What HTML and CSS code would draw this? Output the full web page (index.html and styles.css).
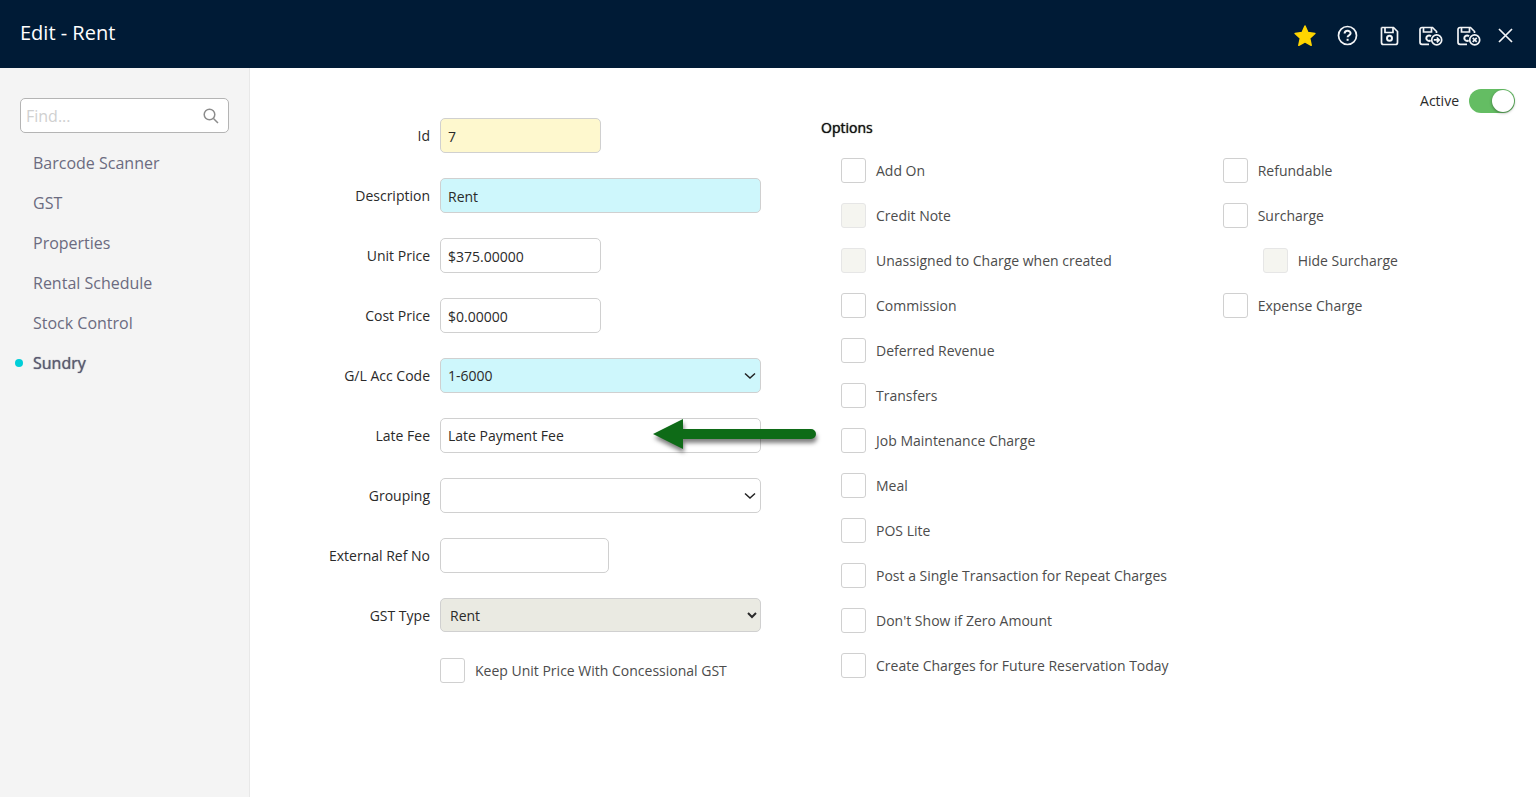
FILE: index.html
```
<!DOCTYPE html>
<html lang="en">
<head>
  <meta charset="UTF-8">
  <meta name="viewport" content="width=device-width, initial-scale=1.0">
  <title>Edit - Rent</title>
  <link rel="stylesheet" href="styles.css">
</head>
<body>
  <header class="topbar">
    <h1>Edit - Rent</h1>
    <div class="toolbar">
      <button type="button" class="wide" aria-label="Favourite">
        <svg width="24" height="24" viewBox="0 0 24 24"><path d="M11 2l2.900 6.600 7 .8-5.200 4.900 1.500 7L11 17.800l-6.200 3.500 1.500-7L1.100 9.400l7-.8z" fill="#ffd500" stroke="#ffd500" stroke-width="1.500" stroke-linejoin="round"/></svg>
      </button>
      <button type="button" class="wide" aria-label="Help">
        <svg width="24" height="24" viewBox="0 0 24 24"><circle cx="12.500" cy="11.500" r="9"/><path d="M9.600 9.600c0-3.700 6-3.600 6-.3 0 2.200-3 2-3 4" stroke-width="2"/><path d="M12.600 14.800v2" stroke-width="2"/></svg>
      </button>
      <button type="button" class="wide" aria-label="Save">
        <svg width="24" height="24" viewBox="0 0 24 24"><path d="M5.500 3.500h12l4 4v11a2 2 0 0 1-2 2h-12a2 2 0 0 1-2-2v-15"/><path d="M9 3.500v5h8v-5"/><circle cx="13.500" cy="14.200" r="2.500" stroke-width="2"/></svg>
      </button>
      <button type="button" aria-label="Save and next">
        <svg width="26" height="24" viewBox="0 0 26 24"><path d="M12 20.300H5a2 2 0 0 1-2-2V5.500a2 2 0 0 1 2-2h10.500l4 4V9"/><path d="M6.500 3.500v4.500h8V3.500"/><path d="M14 12.300c-1.700-1.400-4.700-.6-4.700 1.900s3 3.300 4.300 2.100" stroke-width="2"/><circle cx="19.700" cy="15.900" r="5"/><path d="M16.800 15.900h5.400M19.800 13.500l2.400 2.400-2.400 2.400"/></svg>
      </button>
      <button type="button" aria-label="Save and close">
        <svg width="26" height="24" viewBox="0 0 26 24"><path d="M12 20.300H5a2 2 0 0 1-2-2V5.500a2 2 0 0 1 2-2h10.500l4 4V9"/><path d="M6.500 3.500v4.500h8V3.500"/><path d="M14 12.300c-1.700-1.400-4.700-.6-4.700 1.900s3 3.300 4.300 2.100" stroke-width="2"/><circle cx="19.700" cy="15.900" r="5"/><path d="M17.700 13.900l4 4M21.700 13.900l-4 4"/></svg>
      </button>
      <button type="button" aria-label="Close">
        <svg width="24" height="24" viewBox="0 0 24 24"><path d="M6 5l13 13M19 5L6 18"/></svg>
      </button>
    </div>
  </header>

  <div class="page">
    <aside class="sidebar">
      <div class="search">
        <input type="text" placeholder="Find..." aria-label="Find">
        <svg width="16" height="16" viewBox="0 0 16 16"><circle cx="6.500" cy="6.500" r="5.300"/><path d="M10.500 10.500l4.500 4.500"/></svg>
      </div>
      <nav>
        <a href="#">Barcode Scanner</a>
        <a href="#">GST</a>
        <a href="#">Properties</a>
        <a href="#">Rental Schedule</a>
        <a href="#">Stock Control</a>
        <a href="#" class="current">Sundry</a>
      </nav>
    </aside>

    <main>
      <label class="active-toggle">
        Active
        <input type="checkbox" class="switch" checked>
      </label>

      <div class="content">
        <form class="fields">
          <div class="row">
            <label for="id">Id</label>
            <input type="text" id="id" class="short key" value="7" readonly>
          </div>
          <div class="row">
            <label for="description">Description</label>
            <input type="text" id="description" class="required" value="Rent">
          </div>
          <div class="row">
            <label for="unit-price">Unit Price</label>
            <input type="text" id="unit-price" class="short" value="$375.00000">
          </div>
          <div class="row">
            <label for="cost-price">Cost Price</label>
            <input type="text" id="cost-price" class="short" value="$0.00000">
          </div>
          <div class="row">
            <label for="acc-code">G/L Acc Code</label>
            <div class="combo">
              <select id="acc-code" class="required"><option>1-6000</option></select>
              <svg width="12" height="8" viewBox="0 0 12 8"><path d="M1 1.500l5 4.500 5-4.500"/></svg>
            </div>
          </div>
          <div class="row">
            <label for="late-fee">Late Fee</label>
            <div class="combo">
              <input type="text" id="late-fee" value="Late Payment Fee">
              <svg class="arrow" width="175" height="44" viewBox="0 0 175 44"><path d="M1 16L31 1v10h128a5 5 0 0 1 0 10H31v10z"/></svg>
            </div>
          </div>
          <div class="row">
            <label for="grouping">Grouping</label>
            <div class="combo">
              <select id="grouping"><option></option></select>
              <svg width="12" height="8" viewBox="0 0 12 8"><path d="M1 1.500l5 4.500 5-4.500"/></svg>
            </div>
          </div>
          <div class="row">
            <label for="ref-no">External Ref No</label>
            <input type="text" id="ref-no" class="medium">
          </div>
          <div class="row">
            <label for="gst-type">GST Type</label>
            <select id="gst-type" class="locked"><option>Rent</option></select>
          </div>
          <label class="check indent"><input type="checkbox">Keep Unit Price With Concessional GST</label>
        </form>

        <section class="options">
          <h2>Options</h2>
          <div class="option-columns">
            <div class="option-list">
              <label class="check"><input type="checkbox">Add On</label>
              <label class="check"><input type="checkbox" disabled>Credit Note</label>
              <label class="check"><input type="checkbox" disabled>Unassigned to Charge when created</label>
              <label class="check"><input type="checkbox">Commission</label>
              <label class="check"><input type="checkbox">Deferred Revenue</label>
              <label class="check"><input type="checkbox">Transfers</label>
              <label class="check"><input type="checkbox">Job Maintenance Charge</label>
              <label class="check"><input type="checkbox">Meal</label>
              <label class="check"><input type="checkbox">POS Lite</label>
              <label class="check"><input type="checkbox">Post a Single Transaction for Repeat Charges</label>
              <label class="check"><input type="checkbox">Don't Show if Zero Amount</label>
              <label class="check"><input type="checkbox">Create Charges for Future Reservation Today</label>
            </div>
            <div class="option-list">
              <label class="check"><input type="checkbox">Refundable</label>
              <label class="check"><input type="checkbox">Surcharge</label>
              <label class="check sub"><input type="checkbox" disabled>Hide Surcharge</label>
              <label class="check"><input type="checkbox">Expense Charge</label>
            </div>
          </div>
        </section>
      </div>
    </main>
  </div>
</body>
</html>
```
FILE: styles.css
```
* {
  margin: 0;
  padding: 0;
  box-sizing: border-box;
}

body {
  display: flex;
  flex-direction: column;
  min-height: 100vh;
  font-family: "Open Sans", "Noto Sans", sans-serif;
  font-size: 14px;
  line-height: 20px;
  color: #2a2a2a;
  background: #fff;
}

input, select, button {
  font: inherit;
  color: inherit;
}

/* Top bar */
.topbar {
  display: flex;
  justify-content: space-between;
  height: 68px;
  padding: 0 19px 0 20px;
  background: #001b36;
  color: #fff;
}

.topbar h1 {
  font-size: 20px;
  font-weight: 400;
  line-height: 66px;
}

.toolbar {
  display: flex;
  align-items: center;
  gap: 12px;
  padding-top: 4px;
}

.toolbar button {
  display: flex;
  border: none;
  background: none;
  cursor: pointer;
}

.toolbar .wide {
  margin-right: 5px;
}

.toolbar svg {
  fill: none;
  stroke: #f2f4f6;
  stroke-width: 1.7;
}

/* Sidebar */
.page {
  display: flex;
  flex: 1;
}

.sidebar {
  width: 250px;
  padding: 30px 20px;
  background: #f4f4f4;
  border-right: 1px solid #e8e8e8;
}

.search {
  display: flex;
  align-items: center;
  height: 35px;
  padding: 0 9px 0 5px;
  background: #fff;
  border: 1px solid #b4b4b4;
  border-radius: 5px;
}

.search input {
  flex: 1;
  min-width: 0;
  border: none;
  outline: none;
  background: none;
  font-size: 16px;
}

.search input::placeholder {
  color: #d0d0d0;
}

.search svg {
  fill: none;
  stroke: #8c8c8c;
  stroke-width: 1.5;
}

.sidebar nav {
  display: flex;
  flex-direction: column;
  padding: 10px 13px;
}

.sidebar a {
  position: relative;
  font-size: 16px;
  line-height: 40px;
  color: #6b6b80;
  text-decoration: none;
}

.sidebar .current {
  color: #5a5a70;
  text-shadow: 0 0 1px #5a5a70;
}

.sidebar .current::before {
  content: "";
  position: absolute;
  left: -18px;
  top: 16px;
  width: 8px;
  height: 8px;
  border-radius: 50%;
  background: #00ced8;
}

/* Main area */
main {
  flex: 1;
  padding: 21px 21px 30px 0;
}

.active-toggle {
  display: flex;
  align-items: center;
  justify-content: flex-end;
  gap: 10px;
  height: 24px;
  margin-bottom: 5px;
}

.switch {
  appearance: none;
  display: flex;
  justify-content: flex-end;
  width: 46px;
  height: 24px;
  padding: 1px;
  border-radius: 12px;
  background: #64bd63;
}

.switch::before {
  content: "";
  width: 22px;
  height: 22px;
  border-radius: 50%;
  background: #fff;
  box-shadow: 0 1px 3px rgba(0, 0, 0, 0.4);
}

.content {
  display: flex;
  gap: 60px;
}

.fields {
  display: flex;
  flex-direction: column;
  gap: 25px;
  width: 511px;
}

.row {
  display: flex;
  align-items: center;
  gap: 10px;
  height: 35px;
}

.row > label {
  width: 180px;
  text-align: right;
}

.row input, .row select {
  width: 321px;
  height: 35px;
  padding: 2px 7px 0;
  border: 1px solid #d0d0d0;
  border-radius: 5px;
  background: #fff;
}

.row .short {
  width: 161px;
}

.row .medium {
  width: 169px;
}

.row .key {
  background: #fef8ce;
}

.row .required {
  background: #cef7fc;
}

.row .locked {
  align-self: flex-start;
  height: 34px;
  padding: 0 5px;
  background: #eaeae2;
}

.combo {
  position: relative;
}

.combo select {
  appearance: none;
  padding-top: 0;
}

.combo input {
  padding-top: 0;
}

.combo svg {
  position: absolute;
  right: 5px;
  top: 14px;
  fill: none;
  stroke: #222;
  stroke-width: 1.5;
  pointer-events: none;
}

/* Pointer lying over the late fee box */
.combo .arrow {
  left: 212px;
  top: 0;
  fill: #0e6b17;
  stroke: none;
  filter: drop-shadow(1px 4px 2px rgba(0, 0, 0, 0.5));
}

/* Check boxes */
.check {
  display: flex;
  align-items: center;
  gap: 10px;
  color: #4c4c4c;
}

.check input {
  appearance: none;
  width: 25px;
  height: 25px;
  border: 1px solid #d0d0d0;
  border-radius: 3px;
  background: #fff;
}

.check input:disabled {
  border-color: #e6e6e6;
  background: #f5f5f0;
}

.indent {
  padding-left: 190px;
}

.sub {
  padding-left: 40px;
}

/* Options */
.options {
  flex: 1;
}

.options h2 {
  margin-bottom: 20px;
  font-size: 14px;
  font-weight: 400;
  color: #111;
  text-shadow: 0 0 1px #111;
}

.option-columns {
  display: grid;
  grid-template-columns: 55% 45%;
}

.option-list {
  display: flex;
  flex-direction: column;
  gap: 20px;
  padding-left: 20px;
}
```
